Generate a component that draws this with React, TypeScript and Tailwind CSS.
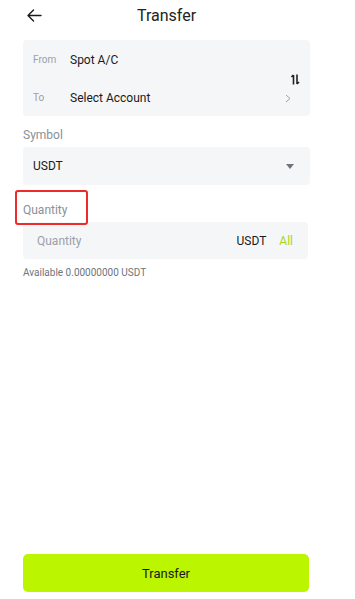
import React from "react";

export default function App() {
  return (
    <div
      className="relative flex min-h-[599px] w-[355px] flex-col bg-white text-[#1a1a1a]"
      style={{ fontFamily: "Roboto, 'Noto Sans', sans-serif" }}
    >
      <div className="ml-[23px] flex w-[287px] flex-1 flex-col">
        {/* Header */}
        <div className="relative flex h-[32px] items-center justify-center">
          <svg
            className="absolute left-[4px] top-[9px]"
            width="15"
            height="13"
            viewBox="0 0 15 13"
            fill="none"
            stroke="#1a1a1a"
            strokeWidth="1.4"
            strokeLinecap="round"
            strokeLinejoin="round"
          >
            <path d="M14 6.5H1.2M6.5 1L1 6.5L6.5 12" />
          </svg>
          <span className="text-[16px] leading-none text-[#222]">Transfer</span>
        </div>

        {/* From / To card */}
        <div className="relative mt-[8px] rounded-[4px] bg-[#f5f6f8]">
          <div className="flex h-[38px] items-center pl-[10px] pt-[1px]">
            <span className="w-[37px] text-[10px] text-[#9aa0a8]">From</span>
            <span className="text-[12px] text-[#1a1a1a]">Spot A/C</span>
          </div>
          <div className="flex h-[38px] items-center pl-[10px] pt-[1px]">
            <span className="w-[37px] text-[10px] text-[#9aa0a8]">To</span>
            <span className="text-[12px] text-[#1a1a1a]">Select Account</span>
          </div>
          <svg
            className="absolute left-[268px] top-[34px]"
            width="9"
            height="11"
            viewBox="0 0 9 11"
            fill="none"
            stroke="#222"
            strokeWidth="1.6"
          >
            <path d="M2.5 10.5V1M0.5 3L2.5 1" strokeLinejoin="miter" />
            <path d="M6 0.5V10M8 8L6 10" />
          </svg>
          <svg
            className="absolute left-[262px] top-[54px]"
            width="6"
            height="9"
            viewBox="0 0 6 9"
            fill="none"
            stroke="#9aa0a8"
            strokeWidth="1"
          >
            <path d="M1 1L5 4.5L1 8" />
          </svg>
        </div>

        {/* Symbol */}
        <div className="mt-[10px] h-[18px] text-[12px] leading-[18px] text-[#8a8f98]">Symbol</div>
        <div className="mt-[3px] flex h-[38px] items-center justify-between rounded-[4px] bg-[#f5f6f8] pl-[10px] pr-[16px]">
          <span className="text-[12px] text-[#1a1a1a]">USDT</span>
          <svg width="8" height="5" viewBox="0 0 8 5">
            <path d="M0 0H8L4 5Z" fill="#6f747c" />
          </svg>
        </div>

        {/* Quantity */}
        <div className="relative mt-[16px] h-[18px] text-[12px] leading-[18px] text-[#8a8f98]">
          Quantity
          <div className="pointer-events-none absolute left-[-8px] top-[-11px] h-[35px] w-[73px] rounded-[3px] border-2 border-[#ee2b2b]" />
        </div>
        <div className="mt-[3px] flex h-[37px] w-[285px] items-center justify-between rounded-[4px] bg-[#f5f6f8] pl-[14px] pr-[15px]">
          <span className="text-[12px] text-[#9aa0a8]">Quantity</span>
          <div className="flex items-center gap-[13px] text-[12px]">
            <span className="text-[#1a1a1a]">USDT</span>
            <span className="text-[#a8d418]">All</span>
          </div>
        </div>
        <div className="mt-[8px] text-[10px] leading-[12px] text-[#6f747c]">
          Available 0.00000000 USDT
        </div>

        <div className="flex-1" />

        {/* Button */}
        <button className="mb-[7px] flex h-[38px] w-[286px] items-center justify-center rounded-[5px] bg-[#bbf500] pt-[1px] text-[13px] text-[#1a1a1a]">
          Transfer
        </button>
      </div>
    </div>
  );
}
